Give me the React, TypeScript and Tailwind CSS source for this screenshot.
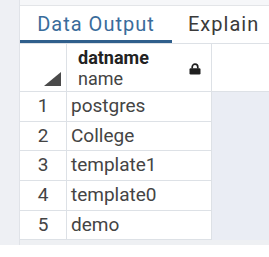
import React from "react";

const rows: [number, string][] = [
  [1, "postgres"],
  [2, "College"],
  [3, "template1"],
  [4, "template0"],
  [5, "demo"],
];
const heights = ["h-[30px]", "h-[29px]", "h-[30px]", "h-[30px]", "h-[29px]"];

function Lock() {
  return (
    <svg width="12" height="12" viewBox="0 0 12 12">
      <path d="M3.2 5.5V4a2.8 2.8 0 0 1 5.6 0v1.5" fill="none" stroke="#1f1f1f" strokeWidth="1.7" />
      <rect x="0.5" y="5.2" width="11" height="6.3" rx="1.2" fill="#1f1f1f" />
    </svg>
  );
}

function Sort() {
  return (
    <svg width="17" height="14" viewBox="0 0 17 14">
      <polygon points="0,14 17,0 17,14" fill="#4a4a4a" />
    </svg>
  );
}

export default function App() {
  return (
    <div
      className="w-[269px] h-[257px] bg-white flex flex-col overflow-hidden"
      style={{ fontFamily: "Roboto, 'Liberation Sans', sans-serif" }}
    >
      <div className="flex h-[245px]">
        <div className="w-[20px] shrink-0 bg-[#eef0f4] border-r border-[#e0e3e8]" />
        <div className="flex-1 flex flex-col min-w-0">
          <div className="h-[6px] shrink-0 bg-[#f6f7f9] border-b border-[#e3e5e8]" />
          <div className="h-[38px] shrink-0 flex items-stretch border-b border-[#dde1e6]">
            <div className="w-[152px] shrink-0 flex items-center justify-center border-b-[3px] border-[#2f5f8c] pt-[2px] text-[20px] tracking-[1px] text-[#3a6c9b]">
              Data Output
            </div>
            <div className="pl-[16px] flex items-center pb-[1px] text-[20px] tracking-[1px] text-[#3a3a3a] whitespace-nowrap">
              Explain
            </div>
          </div>
          <div className="flex-1 flex flex-col bg-[#eaedf4]">
            <div className="h-[48px] shrink-0 flex bg-white border-b border-[#dde1e6]">
              <div className="w-[47px] shrink-0 border-r border-[#dde1e6] flex items-end justify-end pr-[5px] pb-[5px]">
                <Sort />
              </div>
              <div className="w-[145px] shrink-0 border-r border-[#dde1e6] flex items-center pl-[11px] pr-[10px]">
                <div className="flex-1 flex flex-col">
                  <span className="font-bold text-[18px] leading-[21px] text-[#222]">datname</span>
                  <span className="text-[18px] leading-[21px] text-[#444]">name</span>
                </div>
                <div className="pt-[2px]">
                  <Lock />
                </div>
              </div>
            </div>
            {rows.map(([n, name], i) => (
              <div key={n} className={`${heights[i]} shrink-0 flex`}>
                <div className="w-[47px] shrink-0 bg-white border-r border-b border-[#dde1e6] flex items-center justify-center text-[19px] text-[#444]">
                  {n}
                </div>
                <div className="w-[145px] shrink-0 bg-white border-r border-b border-[#dde1e6] flex items-center pl-[4px] text-[19px] text-[#444]">
                  {name}
                </div>
              </div>
            ))}
            <div className="flex-1 bg-[#eef0f3]" />
          </div>
        </div>
      </div>
    </div>
  );
}
